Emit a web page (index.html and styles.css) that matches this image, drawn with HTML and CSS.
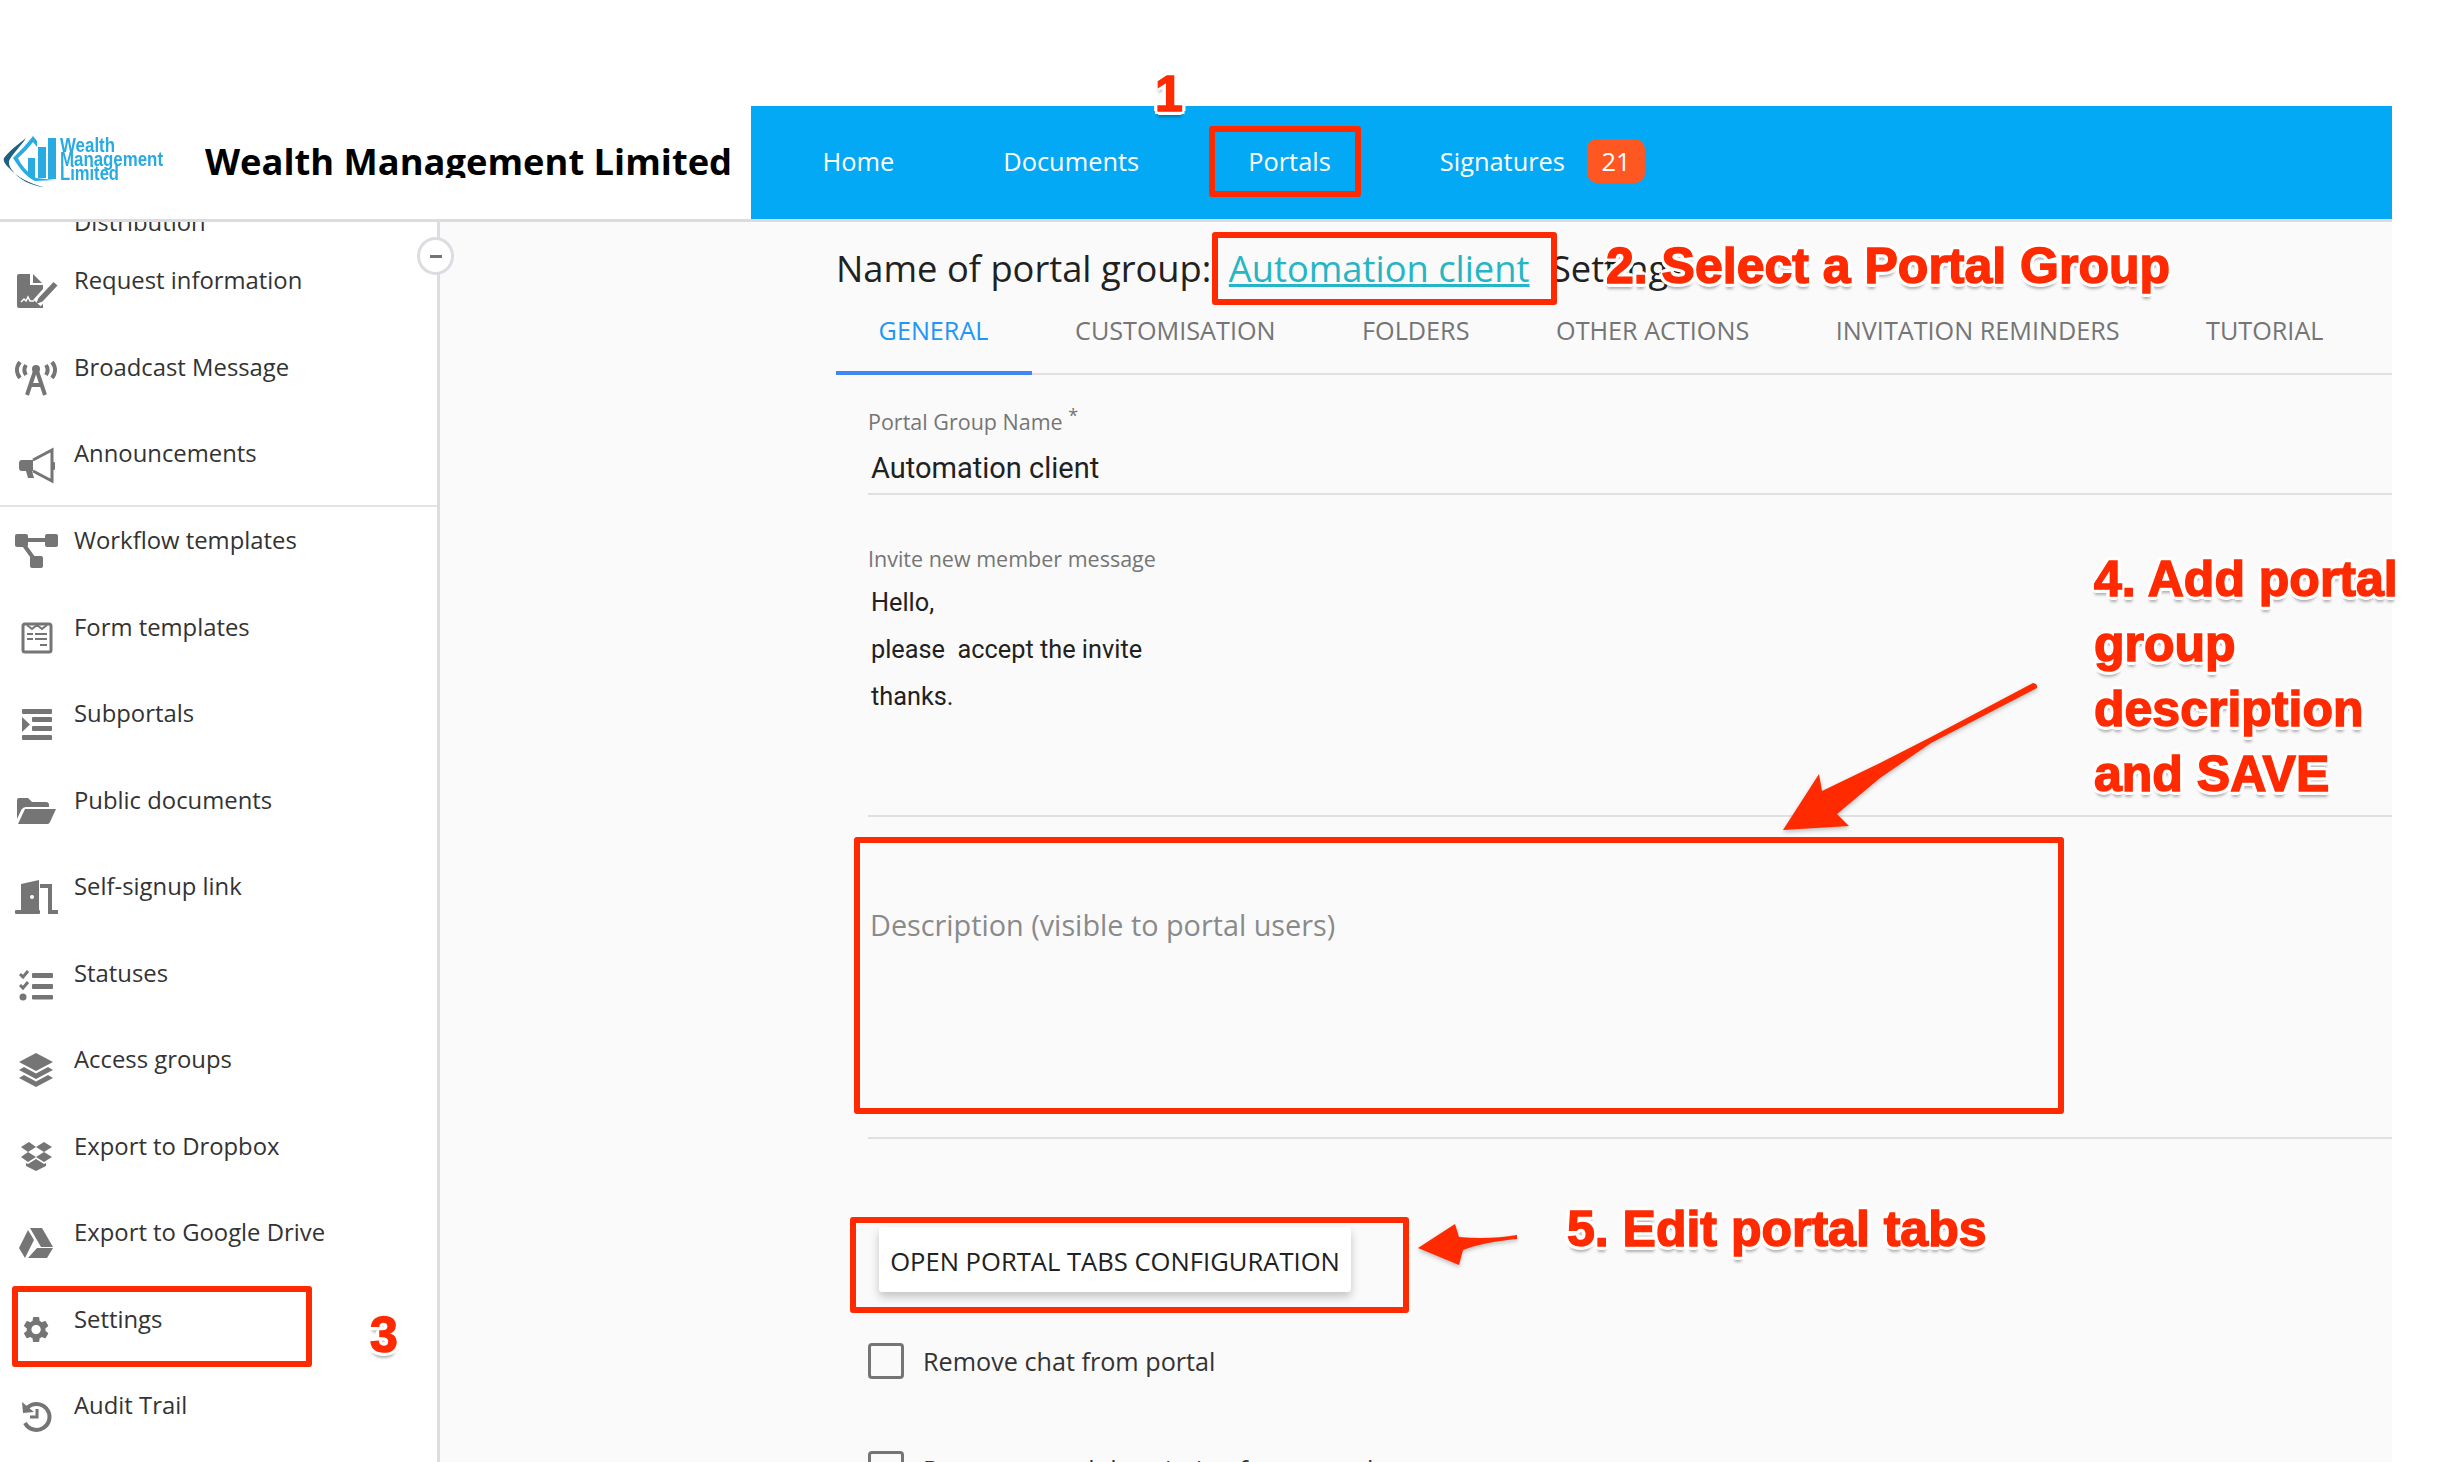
FILE: index.html
```html
<!DOCTYPE html>
<html lang="en">
<head>
<meta charset="utf-8">
<title>Wealth Management Limited</title>
<link rel="stylesheet" href="styles.css">
</head>
<body>
<div class="page">
  <header class="header">
    <div class="brand">
      <svg class="logo" width="165" height="56" viewBox="0 0 165 56">
        <path d="M24 5 C18 10 9 16 2 25 C1 28 3 31 7 35 C15 44 28 51 42 54 C30 53 17 47 10 37 C7 33 6 29 8 26 C12 19 19 13 24 5Z" fill="#1f5f80"/>
        <path d="M31 3 C25 11 18 18 11 25 C16 33 23 43 33 48 L53 47 L34 45 C25 39 19 32 16 25 C22 20 27 14 31 9 L35 14 L35 8Z" fill="#29abe2"/>
        <rect x="26" y="25" width="7" height="19" fill="#29abe2"/>
        <rect x="36" y="14" width="8" height="31" fill="#29abe2"/>
        <rect x="46" y="5" width="8" height="41" fill="#29abe2"/>
        <text class="logo-text" x="58" y="19" textLength="55" lengthAdjust="spacingAndGlyphs">Wealth</text>
        <text class="logo-text" x="58" y="33" textLength="103" lengthAdjust="spacingAndGlyphs">Management</text>
        <text class="logo-text" x="58" y="47" textLength="59" lengthAdjust="spacingAndGlyphs">Limited</text>
      </svg>
      <div class="brand-name">Wealth Management Limited</div>
    </div>
    <nav class="nav">
      <a class="nav-link">Home</a>
      <a class="nav-link">Documents</a>
      <a class="nav-link">Portals</a>
      <a class="nav-link nav-link-badge">Signatures</a>
      <span class="badge">21</span>
    </nav>
  </header>

  <div class="main">
    <aside class="sidebar">
      <div class="item item-cut"><span class="item-text">Distribution</span></div>
      <div class="item">
        <svg class="icon" viewBox="0 0 48 48"><path d="M5 9a2 2 0 0 1 2-2h11v11h13v23H7a2 2 0 0 1-2-2z"/><path d="M21 7l9 9h-9z"/><path d="M25 36l18-20" class="cut"/><path d="M24 37l2.500-6 15-16 4 3.500-15 16z"/><path d="M9 35l3-3 2 2 2-4 2 4h4" class="sig"/></svg>
        <span class="item-text">Request information</span>
      </div>
      <div class="item">
        <svg class="icon" viewBox="0 0 48 48"><path d="M8 8c-4 5-4 11 0 16M40 8c4 5 4 11 0 16M14 11c-2 3-2 7 0 10M34 11c2 3 2 7 0 10" class="line"/><circle cx="24" cy="15" r="4"/><path d="M24 14l-9 27M24 14l9 27M18 31h12" class="line"/></svg>
        <span class="item-text">Broadcast Message</span>
      </div>
      <div class="item item-last">
        <svg class="icon" viewBox="0 0 48 48"><path d="M10 20h11v11h-1l2 7h-6l-2-7h-4a3 3 0 0 1-3-3v-5a3 3 0 0 1 3-3z"/><path d="M21 20l19-10v31l-19-10" class="outline"/><rect x="40" y="22" width="3" height="8" rx="1"/></svg>
        <span class="item-text">Announcements</span>
      </div>
      <div class="item">
        <svg class="icon" viewBox="0 0 48 48"><rect x="3" y="7" width="13" height="13" rx="2"/><rect x="33" y="7" width="13" height="13" rx="2"/><rect x="18" y="29" width="13" height="12" rx="2"/><path d="M14 13h20M12 18l10 14" class="line"/></svg>
        <span class="item-text">Workflow templates</span>
      </div>
      <div class="item">
        <svg class="icon" viewBox="0 0 48 48"><rect x="11" y="10" width="28" height="28" rx="2" class="outline"/><path d="M15 11l5 4 5-4 5 4 5-4" class="thin"/><path d="M15 20h6M23 20h12M15 25h6M23 25h12M28 31h7" class="thin"/></svg>
        <span class="item-text">Form templates</span>
      </div>
      <div class="item">
        <svg class="icon" viewBox="0 0 48 48"><rect x="10" y="9" width="30" height="5" rx="1"/><rect x="20" y="17" width="20" height="5" rx="1"/><rect x="20" y="26" width="20" height="5" rx="1"/><rect x="10" y="35" width="30" height="5" rx="1"/><path d="M10 17l8 7.500-8 7.500z"/></svg>
        <span class="item-text">Subportals</span>
      </div>
      <div class="item">
        <svg class="icon" viewBox="0 0 48 48"><path d="M5 13a2 2 0 0 1 2-2h9l4 4h14a3 3 0 0 1 3 3v2H14a5 5 0 0 0-4.500 2.500L5 32z"/><path d="M13 22h31l-6 13a3 3 0 0 1-2.500 2H6z"/></svg>
        <span class="item-text">Public documents</span>
      </div>
      <div class="item">
        <svg class="icon" viewBox="0 0 48 48"><path d="M9 38V11l18-4v30h-1v1z"/><rect x="3" y="37" width="25" height="4" rx="1"/><path d="M28 11h12v26h6v4H36V15h-8z"/><circle cx="20" cy="24" r="2" class="hole"/></svg>
        <span class="item-text">Self-signup link</span>
      </div>
      <div class="item">
        <svg class="icon" viewBox="0 0 48 48"><rect x="20" y="13" width="21" height="5" rx="1"/><rect x="20" y="24" width="21" height="5" rx="1"/><rect x="20" y="35" width="21" height="4.500" rx="1"/><path d="M8 14l3 3 5-6M8 25l3 3 5-6" class="line-thin"/><circle cx="11" cy="37" r="3.500"/></svg>
        <span class="item-text">Statuses</span>
      </div>
      <div class="item">
        <svg class="icon" viewBox="0 0 48 48"><path d="M24 7l17 9-17 9-17-9z"/><path d="M12 21l12 6.500L36 21l5 3-17 9-17-9z"/><path d="M12 29l12 6.500L36 29l5 3-17 9-17-9z"/></svg>
        <span class="item-text">Access groups</span>
      </div>
      <div class="item">
        <svg class="icon" viewBox="0 0 48 48"><path d="M17 9l7 5-8 5-7-5zM32 9l8 5-8 5-8-5zM9 24l7-5 8 5-8 5zM32 19l8 5-8 5-8-5zM16 31l8-5 8 5 2-1v3l-10 5-10-5v-3z"/></svg>
        <span class="item-text">Export to Dropbox</span>
      </div>
      <div class="item">
        <svg class="icon" viewBox="0 0 48 48"><path d="M18 9h12l11 19H29z"/><path d="M16 11l6 10-9 18-6-10z"/><path d="M25 29h16l-6 10H16z"/></svg>
        <span class="item-text">Export to Google Drive</span>
      </div>
      <div class="item">
        <svg class="icon" viewBox="0 0 48 48"><path transform="translate(8.500 8) scale(1.300)" d="M19.140 12.940c.04-.3.06-.61.06-.94 0-.32-.02-.64-.07-.94l2.030-1.580c.18-.14.23-.41.12-.61l-1.920-3.320c-.12-.22-.37-.29-.59-.22l-2.390.96c-.5-.38-1.030-.7-1.620-.94l-.36-2.540c-.04-.24-.24-.41-.48-.41h-3.840c-.24 0-.43.17-.47.41l-.36 2.540c-.59.24-1.130.57-1.620.94l-2.390-.96c-.22-.08-.47 0-.59.22L2.740 8.870c-.12.21-.08.47.12.61l2.030 1.580c-.05.3-.09.63-.09.94s.02.64.07.94l-2.030 1.580c-.18.14-.23.41-.12.61l1.920 3.320c.12.22.37.29.59.22l2.390-.96c.5.38 1.030.7 1.620.94l.36 2.540c.05.24.24.41.48.41h3.840c.24 0 .44-.17.47-.41l.36-2.540c.59-.24 1.130-.56 1.620-.94l2.390.96c.22.08.47 0 .59-.22l1.920-3.320c.12-.22.07-.47-.12-.61l-2.010-1.580zM12 15.600c-1.980 0-3.600-1.620-3.600-3.600s1.620-3.600 3.600-3.600 3.600 1.620 3.600 3.600-1.620 3.600-3.600 3.600z"/></svg>
        <span class="item-text">Settings</span>
      </div>
      <div class="item">
        <svg class="icon" viewBox="0 0 48 48"><path d="M15 16a13 13 0 1 1-2 15" class="line"/><path d="M10 10l1 11 11-1z"/><path d="M25 17v8h-7" class="line-thin"/></svg>
        <span class="item-text">Audit Trail</span>
      </div>
    </aside>
    <button class="collapse" type="button" aria-label="Collapse"><span class="collapse-bar"></span></button>

    <section class="content">
      <h1 class="heading">Name of portal group: <a class="heading-link">Automation client</a> Settings</h1>
      <div class="tabs">
        <span class="tab tab-active">GENERAL</span>
        <span class="tab">CUSTOMISATION</span>
        <span class="tab">FOLDERS</span>
        <span class="tab">OTHER ACTIONS</span>
        <span class="tab">INVITATION REMINDERS</span>
        <span class="tab">TUTORIAL</span>
      </div>
      <form class="form">
        <div class="field field-name">
          <div class="label">Portal Group Name <sup class="req">*</sup></div>
          <div class="value">Automation client</div>
        </div>
        <div class="field field-invite">
          <div class="label">Invite new member message</div>
          <div class="message">
            <p>Hello,</p>
            <p>please&nbsp; accept the invite</p>
            <p>thanks.</p>
          </div>
        </div>
        <div class="field field-desc">
          <div class="placeholder">Description (visible to portal users)</div>
        </div>
        <button class="open-btn" type="button">OPEN PORTAL TABS CONFIGURATION</button>
        <label class="check"><span class="box"></span><span>Remove chat from portal</span></label>
        <label class="check check-next"><span class="box"></span><span>Remove portal description from portal</span></label>
      </form>
    </section>
  </div>

  <!-- annotations painted over the screenshot -->
  <div class="mark mark-portals"></div>
  <div class="mark mark-link"></div>
  <div class="mark mark-settings"></div>
  <div class="mark mark-desc"></div>
  <div class="mark mark-btn"></div>
  <svg class="arrows" width="2452" height="1462" viewBox="0 0 2452 1462">
    <path class="arrow" d="M2033 683L1931 737L1880 763L1822 791L1819 774L1783 830L1849 826L1837 814L1880 778L1931 743L2037 688Q2038 684 2033 683Z"/>
    <path class="arrow" d="M1418 1248L1455 1224L1459 1237C1480 1239 1500 1238 1517 1235V1239C1497 1241 1478 1244 1463 1250L1459 1265Z"/>
  </svg>
  <div class="note note-1">1</div>
  <div class="note note-2">2. Select a Portal Group</div>
  <div class="note note-3">3</div>
  <div class="note note-4">4. Add portal<br>group<br>description<br>and SAVE</div>
  <div class="note note-5">5. Edit portal tabs</div>
</div>
</body>
</html>
```
FILE: styles.css
```css
* { box-sizing: border-box; }
html, body { margin: 0; padding: 0; background: #fff; }
.page {
  position: relative;
  width: 2452px;
  height: 1462px;
  overflow: hidden;
  padding-top: 106px;
  font-family: "Open Sans", sans-serif;
  color: #333;
}

/* header */
.header {
  display: flex;
  width: 2392px;
  height: 116px;
  border-bottom: 3px solid #dcdce0;
}
.brand {
  display: flex;
  align-items: flex-start;
  width: 751px;
  flex: none;
  padding-left: 2px;
}
.logo { margin-top: 27px; flex: none; filter: blur(.5px); }
.logo-text { font-family: "Liberation Sans", sans-serif; font-weight: 700; font-size: 20px; fill: #29abe2; }
.brand-name {
  margin: 33px 0 0 38px;
  height: 39px;
  overflow: hidden;
  font-size: 36.300px;
  line-height: 44px;
  font-weight: 700;
  color: #000;
  white-space: nowrap;
}
.nav {
  display: flex;
  align-items: center;
  flex: 1;
  height: 113px;
  padding: 0 0 3px 17px;
  background: #03a9f4;
  color: #fff;
  font-size: 25.400px;
}
.nav-link { padding: 0 54.500px; }
.nav-link-badge { padding-right: 22px; }
.badge {
  width: 58px;
  height: 44px;
  border-radius: 10px;
  background: #ff5722;
  color: #fff;
  text-align: center;
  line-height: 44px;
}

/* sidebar */
.main { display: flex; width: 2392px; height: 1240px; position: relative; }
.sidebar {
  width: 440px;
  flex: none;
  height: 1240px;
  overflow: hidden;
  background: #fff;
  border-right: 3px solid #dcdce2;
}
.item {
  display: flex;
  align-items: flex-start;
  height: 86.500px;
  padding-left: 12px;
  font-size: 23.850px;
  line-height: 36px;
  color: #333;
}
.item-cut { height: 58px; margin-top: -18px; padding-left: 74px; }
.item-last { height: 72px; margin-bottom: 15px; border-bottom: 2px solid #e4e4e6; }
.item-text { white-space: nowrap; }
.icon { width: 48px; height: 48px; flex: none; margin: 5px 14px 0 0; fill: #757575; }
.line { fill: none; stroke: #757575; stroke-width: 4; }
.line-thin { fill: none; stroke: #757575; stroke-width: 3; }
.thin { fill: none; stroke: #757575; stroke-width: 2; }
.outline { fill: none; stroke: #757575; stroke-width: 3; }
.cut { fill: none; stroke: #fff; stroke-width: 10; }
.sig { fill: none; stroke: #fff; stroke-width: 1.500; }
.hole { fill: #fff; }
.collapse {
  position: absolute;
  left: 417px;
  top: 15px;
  width: 37px;
  height: 38px;
  padding: 0;
  border: 3px solid #dcdce2;
  border-radius: 50%;
  background: #fff;
  display: flex;
  align-items: center;
  justify-content: center;
}
.collapse-bar { width: 12px; height: 3px; background: #757575; }

/* content */
.content { flex: 1; background: #fafafa; padding-left: 396px; min-width: 0; }
.heading {
  margin: 0;
  padding-top: 26px;
  height: 67px;
  font-size: 36.300px;
  line-height: 40px;
  font-weight: 400;
  color: #212121;
  white-space: nowrap;
}
.heading-link { margin: 0 12px 0 8px; color: #26b5c6; text-decoration: underline; text-decoration-thickness: 3px; }
.tabs {
  display: flex;
  height: 86px;
  border-bottom: 2px solid #e0e0e0;
}
.tab {
  position: relative;
  padding: 0 43.300px;
  font-size: 25.200px;
  line-height: 82px;
  color: #757575;
  white-space: nowrap;
}
.tab-active { color: #2196f3; padding-left: 42.600px; }
.tab-active::after {
  content: "";
  position: absolute;
  left: 0;
  right: 0;
  bottom: -2px;
  height: 4px;
  background: #4285f4;
}
.form { padding-left: 32px; }
.field-name { margin-top: 33px; height: 87px; border-bottom: 2px solid #e0e0e0; }
.label { font-size: 21.500px; line-height: 28px; color: #757575; }
.req { font-size: 18px; line-height: 0; }
.value {
  margin: 12px 0 0 3px;
  font-family: Roboto, sans-serif;
  font-size: 29px;
  line-height: 40px;
  color: #212121;
}
.field-invite { margin-top: 50px; height: 272px; border-bottom: 2px solid #e0e0e0; }
.message { padding: 0 0 0 3px; font-family: Roboto, sans-serif; font-size: 25.300px; line-height: 47px; color: #212121; margin-top: 6px; }
.message p { margin: 0; }
.field-desc { height: 322px; border-bottom: 2px solid #e0e0e0; padding: 88px 0 0 2px; }
.placeholder { font-size: 28.800px; line-height: 40px; color: #8a8a8a; }
.open-btn {
  display: block;
  margin: 88px 0 0 11px;
  width: 472px;
  height: 65px;
  padding: 4px 0 0;
  border: 0;
  border-radius: 3px;
  background: #fff;
  font-family: "Open Sans", sans-serif;
  font-size: 25.600px;
  color: #212121;
  box-shadow: 0 5px 10px rgba(0,0,0,.22);
}
.check { display: flex; align-items: center; gap: 19px; margin-top: 51px; font-size: 25.200px; line-height: 36px; color: #333; }
.check-next { margin-top: 72px; }
.box { width: 36px; height: 36px; flex: none; border: 3px solid #757575; border-radius: 4px; }

/* annotations */
.mark { position: absolute; border: 6px solid #ff2a00; border-radius: 3px; }
.mark-portals { left: 1209px; top: 126px; width: 152px; height: 71px; }
.mark-link { left: 1212px; top: 232px; width: 345px; height: 73px; }
.mark-settings { left: 12px; top: 1286px; width: 300px; height: 81px; }
.mark-desc { left: 854px; top: 837px; width: 1210px; height: 277px; }
.mark-btn { left: 850px; top: 1217px; width: 559px; height: 96px; }
.arrows { position: absolute; left: 0; top: 0; pointer-events: none; }
.arrow { fill: #ff2a00; filter: drop-shadow(0 2px 2px rgba(0,0,0,.25)); }
.note {
  position: absolute;
  font-family: "Liberation Sans", sans-serif;
  font-weight: 700;
  font-size: 50px;
  line-height: 65px;
  color: #ff2a00;
  white-space: nowrap;
  -webkit-text-stroke: 1.500px #ff2a00;
  text-shadow:
    4px 0 0 #fff, -4px 0 0 #fff, 0 4px 0 #fff, 0 -4px 0 #fff,
    3px 3px 0 #fff, -3px 3px 0 #fff, 3px -3px 0 #fff, -3px -3px 0 #fff,
    0 6px 3px rgba(0,0,0,.3);
}
.note-1 { left: 1155px; top: 62px; }
.note-2 { left: 1606px; top: 234px; }
.note-3 { left: 370px; top: 1303px; }
.note-4 { left: 2094px; top: 547px; }
.note-5 { left: 1567px; top: 1197px; }
```
